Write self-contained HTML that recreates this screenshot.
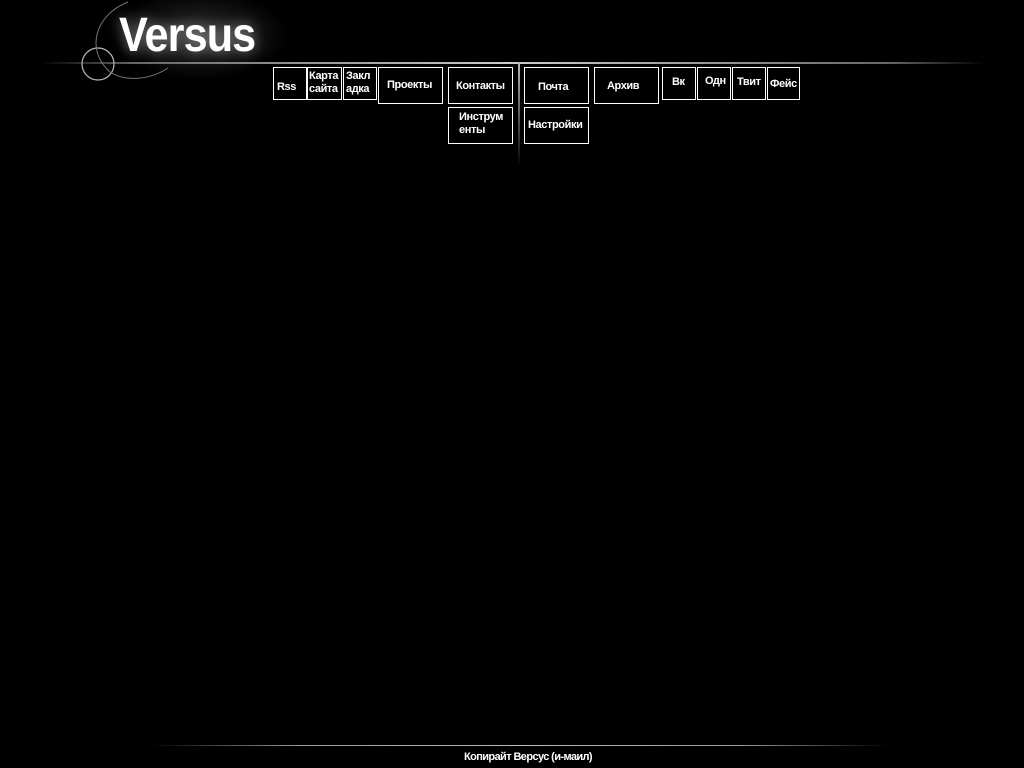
<!DOCTYPE html>
<html><head><meta charset="utf-8"><style>
body{margin:0;width:1024px;height:768px;background:#000;position:relative;overflow:hidden;font-family:"Liberation Sans Narrow","Liberation Sans",sans-serif}
.b{position:absolute;border:1px solid #fff;box-sizing:border-box;color:#fff;font-weight:bold;font-size:11px;line-height:13px;letter-spacing:-0.4px}
.b span{position:absolute}
.logo{position:absolute;left:119px;top:8px;font-family:"Liberation Sans",sans-serif;font-weight:bold;font-size:48px;color:#fff;letter-spacing:-1px;transform:scaleX(0.9);transform-origin:left;text-shadow:0 0 14px rgba(255,255,255,.5)}
</style></head><body>
<div style="position:absolute;left:110px;top:-10px;width:180px;height:90px;background:radial-gradient(ellipse at center,rgba(255,255,255,.18),rgba(0,0,0,0) 70%)"></div>
<svg style="position:absolute;left:0;top:0" width="1024" height="200">
<defs><linearGradient id="g" x1="0" x2="1"><stop offset="0" stop-color="#000"/><stop offset=".1" stop-color="#666"/><stop offset=".5" stop-color="#ccc"/><stop offset=".9" stop-color="#666"/><stop offset="1" stop-color="#000"/></linearGradient>
<linearGradient id="v" x1="0" x2="0" y1="0" y2="1"><stop offset="0" stop-color="#bbb"/><stop offset="1" stop-color="#000"/></linearGradient></defs>
<rect x="40" y="62" width="945" height="2" fill="url(#g)"/>
<rect x="518" y="62" width="2" height="105" fill="url(#v)"/>
<circle cx="98" cy="64" r="16" fill="none" stroke="#bbb" stroke-width="1.2"/>
<path d="M128 2 C 95 15, 85 50, 110 72 C 125 82, 150 80, 168 68" fill="none" stroke="#777" stroke-width="1"/>
</svg>
<div class="logo">Versus</div>
<div class="b" style="left:273px;top:67px;width:34px;height:33px"><span style="left:3px;top:13px">Rss</span></div>
<div class="b" style="left:307px;top:67px;width:35px;height:33px"><span style="left:1px;top:2px">Карта<br>сайта</span></div>
<div class="b" style="left:343px;top:67px;width:34px;height:33px"><span style="left:2px;top:2px">Закл<br>адка</span></div>
<div class="b" style="left:378px;top:67px;width:65px;height:37px"><span style="left:8px;top:11px">Проекты</span></div>
<div class="b" style="left:448px;top:67px;width:65px;height:37px"><span style="left:7px;top:12px">Контакты</span></div>
<div class="b" style="left:448px;top:107px;width:65px;height:37px"><span style="left:10px;top:3px">Инструм<br>енты</span></div>
<div class="b" style="left:524px;top:67px;width:65px;height:37px"><span style="left:13px;top:13px">Почта</span></div>
<div class="b" style="left:524px;top:107px;width:65px;height:37px"><span style="left:3px;top:11px">Настройки</span></div>
<div class="b" style="left:594px;top:67px;width:65px;height:37px"><span style="left:12px;top:12px">Архив</span></div>
<div class="b" style="left:662px;top:67px;width:34px;height:33px"><span style="left:9px;top:8px">Вк</span></div>
<div class="b" style="left:697px;top:67px;width:34px;height:33px"><span style="left:7px;top:7px">Одн</span></div>
<div class="b" style="left:732px;top:67px;width:34px;height:33px"><span style="left:4px;top:8px">Твит</span></div>
<div class="b" style="left:767px;top:67px;width:33px;height:33px"><span style="left:2px;top:10px">Фейс</span></div>
<div style="position:absolute;left:150px;top:745px;width:740px;height:1px;background:linear-gradient(90deg,#000,#999 20%,#bbb 50%,#999 80%,#000)"></div>
<div style="position:absolute;left:0;width:1056px;top:751px;text-align:center;color:#fff;font-weight:bold;font-size:11px;letter-spacing:-0.6px">Копирайт Версус (и-маил)</div>
</body></html>
